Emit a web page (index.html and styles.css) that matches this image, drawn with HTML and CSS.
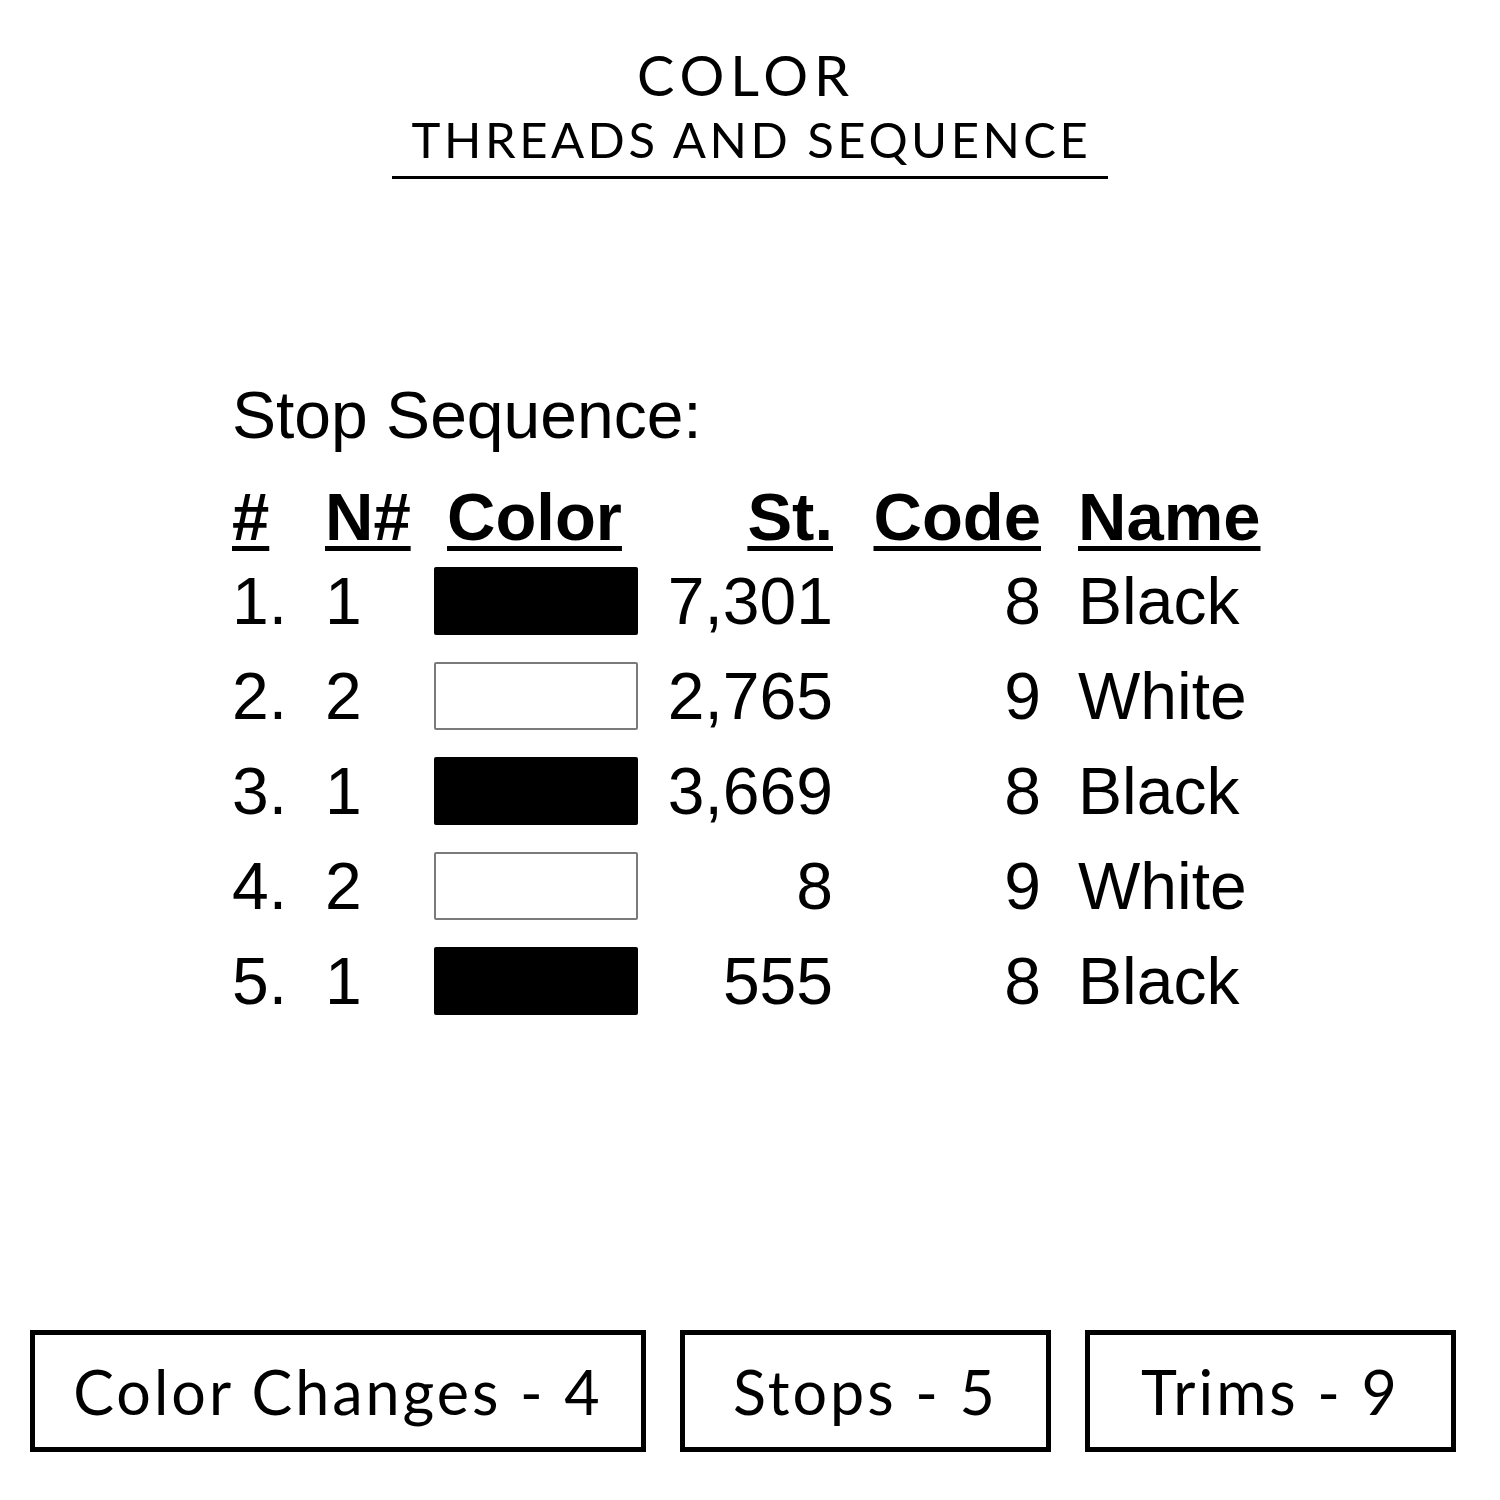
FILE: index.html
```html
<!DOCTYPE html>
<html>
<head>
<meta charset="utf-8">
<link rel="stylesheet" href="styles.css">
</head>
<body>
<div class="page">
  <header class="head">
    <div class="head-title">COLOR</div>
    <div class="head-sub">THREADS AND SEQUENCE</div>
  </header>

  <section class="seq">
    <div class="seq-title">Stop Sequence:</div>
    <div class="grid">
      <div class="th c-num">#</div>
      <div class="th c-n">N#</div>
      <div class="th c-color"><span class="th-color">Color</span></div>
      <div class="th c-st">St.</div>
      <div class="th c-code">Code</div>
      <div class="th c-name">Name</div>

      <div class="td c-num">1.</div>
      <div class="td c-n">1</div>
      <div class="td c-color"><span class="sw sw-black"></span></div>
      <div class="td c-st">7,301</div>
      <div class="td c-code">8</div>
      <div class="td c-name">Black</div>

      <div class="td c-num">2.</div>
      <div class="td c-n">2</div>
      <div class="td c-color"><span class="sw sw-white"></span></div>
      <div class="td c-st">2,765</div>
      <div class="td c-code">9</div>
      <div class="td c-name">White</div>

      <div class="td c-num">3.</div>
      <div class="td c-n">1</div>
      <div class="td c-color"><span class="sw sw-black"></span></div>
      <div class="td c-st">3,669</div>
      <div class="td c-code">8</div>
      <div class="td c-name">Black</div>

      <div class="td c-num">4.</div>
      <div class="td c-n">2</div>
      <div class="td c-color"><span class="sw sw-white"></span></div>
      <div class="td c-st">8</div>
      <div class="td c-code">9</div>
      <div class="td c-name">White</div>

      <div class="td c-num">5.</div>
      <div class="td c-n">1</div>
      <div class="td c-color"><span class="sw sw-black"></span></div>
      <div class="td c-st">555</div>
      <div class="td c-code">8</div>
      <div class="td c-name">Black</div>
    </div>
  </section>

  <footer class="stats">
    <div class="stat stat-wide">Color Changes - 4</div>
    <div class="stat">Stops - 5</div>
    <div class="stat">Trims - 9</div>
  </footer>
</div>
</body>
</html>
```

FILE: styles.css
```css
html, body {
  margin: 0;
  padding: 0;
  background: #fff;
}

.page {
  width: 1500px;
  height: 1500px;
  display: flex;
  flex-direction: column;
  color: #000;
}

.head {
  align-self: center;
  width: 716px;
  margin-top: 44px;
  border-bottom: 3px solid #000;
  text-align: center;
  font-family: "Lato", "Noto Sans", sans-serif;
  padding-bottom: 9px;
}

.head-title {
  font-size: 56px;
  line-height: 62px;
  font-weight: 400;
  letter-spacing: 6px;
  padding-right: 8px;
}

.head-sub {
  font-size: 49px;
  line-height: 56px;
  margin-top: 5px;
  font-weight: 400;
  letter-spacing: 3.5px;
  padding-left: 3px;
}

.seq {
  margin-top: 198px;
  padding-left: 232px;
  font-family: "Liberation Sans", Arial, sans-serif;
}

.seq-title {
  font-size: 66px;
  line-height: 76px;
}

.grid {
  margin-top: 24px;
  display: grid;
  grid-template-columns: 93px 109px 204px 195px 208px auto;
  grid-template-rows: 76px repeat(5, 95px);
  align-items: center;
}

.th {
  font-size: 67px;
  font-weight: bold;
  text-decoration: underline;
  text-decoration-thickness: 5px;
  text-underline-offset: 6px;
  line-height: 80px;
  align-self: start;
}

.td {
  font-size: 66px;
  line-height: 76px;
}

.c-st, .c-code {
  text-align: right;
}

.c-name {
  padding-left: 37px;
}

.th-color {
  margin-left: 13px;
}

.sw {
  display: block;
  width: 204px;
  height: 68px;
  box-sizing: border-box;
  border-radius: 2px;
}

.sw-black {
  background: #000;
}

.sw-white {
  background: #fff;
  border: 2px solid #7a7a7a;
}

.stats {
  margin-top: auto;
  margin-bottom: 48px;
  padding-left: 30px;
  display: flex;
  gap: 34px;
  font-family: "Lato", "Noto Sans", sans-serif;
}

.stat {
  width: 371px;
  height: 122px;
  box-sizing: border-box;
  border: 5px solid #000;
  display: flex;
  align-items: center;
  justify-content: center;
  font-size: 61px;
  letter-spacing: 3px;
}

.stat-wide {
  width: 616px;
}
```
